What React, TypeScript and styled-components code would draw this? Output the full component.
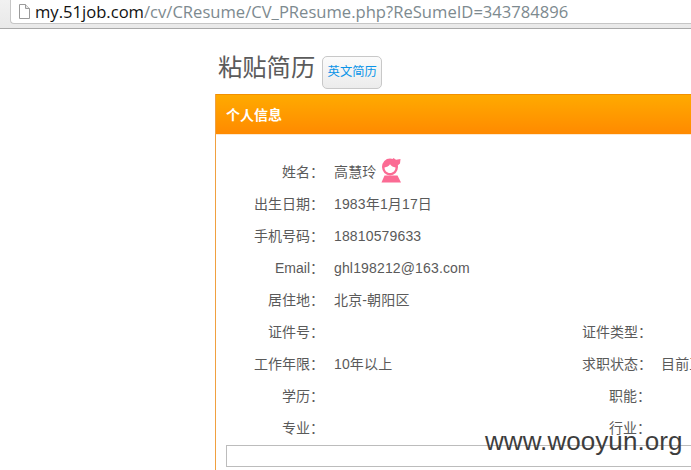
import React from 'react';
import styled, { createGlobalStyle } from 'styled-components';

const Global = createGlobalStyle`
  html, body { margin: 0; padding: 0; width: 691px; height: 470px; overflow: hidden; background: #fff; }
  #root { width: 691px; height: 470px; overflow: hidden; position: relative; }
`;
const sans = `"Liberation Sans", "Noto Sans CJK SC", sans-serif`;

const BrowserBar = styled.div`
  height: 29px; box-sizing: border-box; border-bottom: 1px solid #a9a9a9;
  background: linear-gradient(#f1f1f1, #e9e9e9); padding: 0 0 4px 10px; display: flex;
`;
const Omnibox = styled.div`
  flex: 1; display: flex; align-items: center; gap: 5px; height: 24px; box-sizing: border-box;
  padding-left: 7px; background: #fff;
  border: 1px solid #c6c6c6; border-top: none; border-right: none; border-bottom-left-radius: 4px;
  font: 16.6px/26px "Open Sans", sans-serif; white-space: nowrap;
`;
const Host = styled.span` color: #111; `;
const Path = styled.span` color: #7d8a8f; `;
const Main = styled.main` margin-left: 215px; width: 600px; `;
const TitleRow = styled.div` display: flex; align-items: flex-end; height: 65px; padding: 0 0 5px 3px; gap: 7px; box-sizing: border-box; `;
const Title = styled.h1` margin: 0 0 6px; font: 400 24.300px/30px ${sans}; color: #5b5b5b; `;
const LangButton = styled.button`
  width: 60px; height: 33px; padding: 0; border: 1px solid #c8c8c8; border-radius: 5px;
  background: linear-gradient(#fbfbfb, #ececec); color: #0a94e8; font: 12.300px/1 ${sans};
`;
const Panel = styled.section` border-left: 1px solid #f0a040; padding-bottom: 20px; `;
const PanelHead = styled.header`
  height: 41px; box-sizing: border-box; padding-left: 10px; border-top: 1px solid #f39000;
  background: linear-gradient(#ffaa00, #ff8a00); color: #fff; font: 700 14px/40px ${sans};
  border-bottom: 1px solid #fde9cf;
`;
const Rows = styled.div` padding-top: 21px; `;
const Row = styled.div` display: flex; height: 32px; align-items: center; font: 14px/32px ${sans}; color: #5a5a5a; `;
const Label = styled.span<{ $w: number }>` width: ${p => p.$w}px; text-align: right; flex: none; white-space: nowrap; `;
const Value = styled.span<{ $w?: number }>`
  margin-left: 10px; white-space: nowrap; display: flex; align-items: center; gap: 5px; letter-spacing: .15px;
  ${p => (p.$w ? `width: ${p.$w}px; flex: none;` : '')}
`;
const Box = styled.div` height: 22px; box-sizing: border-box; margin: 1px 0 0 10px; border: 1px solid #bcbcbc; `;
const Mark = styled.div`
  position: absolute; left: 485px; top: 425px; font: 26px/32px ${sans}; color: #3d3d3d; letter-spacing: .07px;
  white-space: nowrap;
`;
const GirlSvg = styled.svg` flex: none; margin-bottom: 4px; `;

const PageIcon = () => (
  <svg width="12" height="15" viewBox="0 0 12 15">
    <path d="M1.5.5h6l4 4v10h-10z" fill="#fff" stroke="#9a9a9a" />
    <path d="M7.5.5v4h4" fill="#e6e6e6" stroke="#9a9a9a" />
  </svg>
);
const GirlIcon = () => (
  <GirlSvg width="21" height="26" viewBox="0 0 21 26">
    <path d="M.5 25.500 3.500 18.500h13l3.500 7z" fill="#fb6b94" />
    <ellipse cx="9" cy="10" rx="8" ry="8.500" fill="#fb6b94" />
    <path d="M3.500 10.500c2.200-.4 4.500-1.500 5.500-3.300 1.300 1.800 3.300 2.900 5.500 3.300 0 3-2.400 5.500-5.500 5.500s-5.500-2.500-5.500-5.500z" fill="#fff" />
    <path d="M10.500 3.500 12.500 1l2.500 1.800L19.500 2 19 6.500 16 9z" fill="#fb6b94" />
  </GirlSvg>
);

type R = { l: string; v?: React.ReactNode; l2?: string; v2?: string };
const rows: R[] = [
  { l: '姓名：', v: <>高慧玲<GirlIcon /></> },
  { l: '出生日期：', v: '1983年1月17日' },
  { l: '手机号码：', v: '18810579633' },
  { l: 'Email：', v: 'ghl198212@163.com' },
  { l: '居住地：', v: '北京-朝阳区' },
  { l: '证件号：', l2: '证件类型：' },
  { l: '工作年限：', v: '10年以上', l2: '求职状态：', v2: '目前正在找工作' },
  { l: '学历：', l2: '职能：' },
  { l: '专业：', l2: '行业：' },
];

export default function App() {
  return (
    <>
      <Global />
      <BrowserBar>
        <Omnibox>
          <PageIcon />
          <span><Host>my.51job.com</Host><Path>/cv/CResume/CV_PResume.php?ReSumeID=343784896</Path></span>
        </Omnibox>
      </BrowserBar>
      <Main>
        <TitleRow>
          <Title>粘贴简历</Title>
          <LangButton>英文简历</LangButton>
        </TitleRow>
        <Panel>
          <PanelHead>个人信息</PanelHead>
          <Rows>
            {rows.map(r => (
              <Row key={r.l}>
                <Label $w={108}>{r.l}</Label>
                <Value $w={r.l2 ? 248 : undefined}>{r.v}</Value>
                {r.l2 && <Label $w={69}>{r.l2}</Label>}
                {r.v2 && <Value>{r.v2}</Value>}
              </Row>
            ))}
          </Rows>
          <Box />
        </Panel>
      </Main>
      <Mark>www.wooyun.org</Mark>
    </>
  );
}
